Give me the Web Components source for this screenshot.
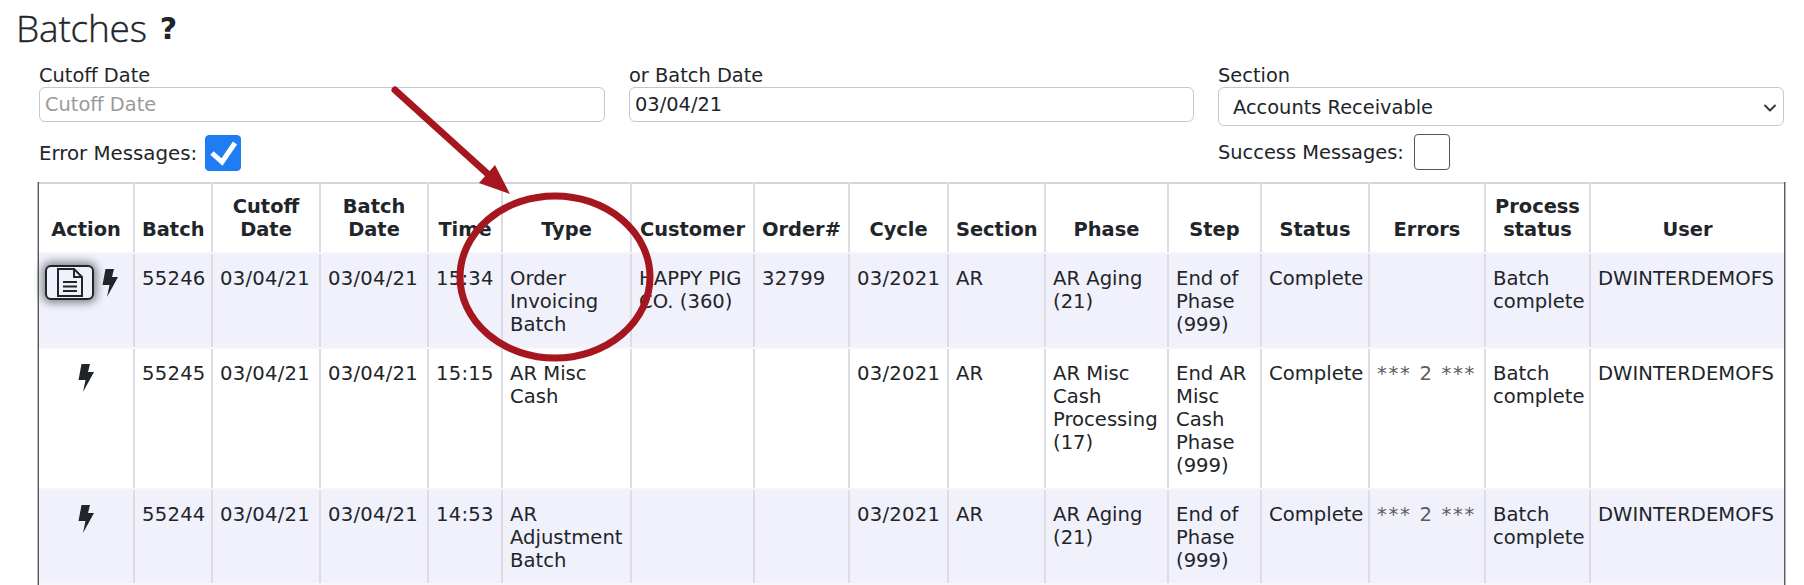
<!DOCTYPE html>
<html><head><meta charset="utf-8">
<style>
html,body{margin:0;padding:0;background:#fff;overflow:hidden}
body{width:1804px;height:585px;font-family:"DejaVu Sans",sans-serif;color:#212529}
</style></head><body>
<batches-page></batches-page>
<script>
const bolt=`<svg width="16" height="28" viewBox="0 0 16 28" style="flex:none"><path fill="#212529" d="M3.500 0H12L10 8H16L5 28L7.500 16H0.500Z"/></svg>`;
class BatchesPage extends HTMLElement{constructor(){super();this.attachShadow({mode:'open'}).innerHTML=`<style>
:host{display:block;position:relative;width:1804px;height:585px;overflow:hidden}
h1{margin:0;padding:5px 0 0 16px;height:45px;font:300 37px/45px "Open Sans",sans-serif;color:#212529;display:flex;align-items:center;gap:13px;letter-spacing:-.2px;-webkit-text-stroke:.35px #212529}
h1 b{font:700 30px/1 "DejaVu Sans",sans-serif;-webkit-text-stroke:0;margin-top:3px}
.filters{display:grid;grid-template-columns:566px 565px 566px;column-gap:24px;padding:14px 20px 0 39px;font-size:19.4px;width:max-content}
.overlay{position:absolute;left:0;top:0;pointer-events:none}
batch-table{margin:11px 0 0 39px}
</style>
<h1>Batches <b>?</b></h1>
<div class="filters">
<filter-field label="Cutoff Date" placeholder="Cutoff Date"></filter-field>
<filter-field label="or Batch Date" value="03/04/21"></filter-field>
<filter-field label="Section" value="Accounts Receivable" select></filter-field>
<check-field label="Error Messages:" checked></check-field>
<span></span>
<check-field label="Success Messages:"></check-field>
</div>
<batch-table></batch-table>
<svg class="overlay" width="1804" height="585">
<line x1="395" y1="90" x2="490" y2="176" stroke="#a5161f" stroke-width="7" stroke-linecap="round"/>
<path d="M510 194L479 183L495 165Z" fill="#a5161f"/>
<ellipse cx="555" cy="277" rx="95" ry="81" fill="none" stroke="#a5161f" stroke-width="7"/>
</svg>`}}
class FilterField extends HTMLElement{connectedCallback(){const sel=this.hasAttribute('select');const l=this.getAttribute('label'),v=this.getAttribute('value'),p=this.getAttribute('placeholder');
this.attachShadow({mode:'open'}).innerHTML=`<style>
:host{display:block;margin-top:-1px}
label{display:block;height:24px;line-height:26px}
.box{box-sizing:border-box;height:${sel?39:35}px;border:1px solid #c6c8cb;border-radius:6px;display:flex;align-items:center;justify-content:space-between;padding:${sel?2:0}px ${sel?5:6}px 0 ${sel?14:5}px;font-size:19.4px;color:${v?'#212529':'#9a9a9a'}}
</style><label>${l}</label><div class="box"><span>${v||p}</span>${sel?'<svg width="16" height="16" viewBox="0 0 16 16"><path fill="none" stroke="#343a40" stroke-width="2" stroke-linecap="round" stroke-linejoin="round" d="M3 5.500l5 5 5-5"/></svg>':''}</div>`}}
class CheckField extends HTMLElement{connectedCallback(){const c=this.hasAttribute('checked');
this.attachShadow({mode:'open'}).innerHTML=`<style>
:host{display:flex;align-items:center;gap:${c?8:10}px;margin-top:${c?9:8}px;height:36px;font-size:${c?19.8:19.4}px}
.c{box-sizing:border-box;width:36px;height:36px;border-radius:4px;border:1px solid ${c?'#1f7cf2':'#555'};background:${c?'#1f7cf2':'#fff'};display:block}
svg{display:block;margin:-1px}
</style><span>${this.getAttribute('label')}</span><span class="c">${c?'<svg width="36" height="36" viewBox="0 0 36 36"><path fill="none" stroke="#fff" stroke-width="5" d="M7 18l10 9L30 8"/></svg>':''}</span>`}}
const cols=[95,78,108,108,74,129,123,95,99,97,123,93,108,116,105,194];
const heads=['Action','Batch','Cutoff Date','Batch Date','Time','Type','Customer','Order#','Cycle','Section','Phase','Step','Status','Errors','Process status','User'];
const rows=[
['doc','55246','03/04/21','03/04/21','15:34','Order Invoicing Batch','HAPPY PIG CO. (360)','32799','03/2021','AR','AR Aging (21)','End of Phase (999)','Complete','','Batch complete','DWINTERDEMOFS'],
['','55245','03/04/21','03/04/21','15:15','AR Misc Cash','','','03/2021','AR','AR Misc Cash Processing (17)','End AR Misc Cash Phase (999)','Complete','*** 2 ***','Batch complete','DWINTERDEMOFS'],
['','55244','03/04/21','03/04/21','14:53','AR Adjustment Batch','','','03/2021','AR','AR Aging (21)','End of Phase (999)','Complete','*** 2 ***','Batch complete','DWINTERDEMOFS']];
class BatchTable extends HTMLElement{constructor(){super();
const doc=`<span class="btn"><svg width="26" height="29" viewBox="0 0 26 29"><path fill="none" stroke="#212529" stroke-width="2" d="M1 1H17L25 9V28H1ZM17 1V9H25M6 14H20M6 18.500H20M6 23H20"/></svg></span>`;
this.attachShadow({mode:'open'}).innerHTML=`<style>
:host{display:block;width:1745px}
table{border-collapse:collapse;table-layout:fixed;width:1745px;font-size:19.600px;line-height:23px;box-shadow:-1px 0 0 #555b63,-2px 0 0 #b4b8bc,1px 0 0 #555b63,2px 0 0 #b4b8bc;border-top:2px solid #d4d4d8}
th,td{border:2px solid #dcdce2;border-top-color:#f6f6fa;border-bottom-color:#f6f6fa;padding:13px 7px 11px;vertical-align:top;text-align:left;box-sizing:border-box}
th:first-child,td:first-child{border-left:0}th:last-child,td:last-child{border-right:0}
th{font-size:19.4px;font-weight:700;text-align:center;vertical-align:bottom;padding:0 7px 11px;height:70px;border-top:0;color:#212529}
tbody tr:nth-child(odd) td{background:#f1f1fc}
td.a{padding:10px 0 0 0}
.act{display:flex;align-items:flex-start;justify-content:center;gap:8px;padding-top:5px}
.act.d{justify-content:flex-start;padding:0 0 0 6px}
.n{letter-spacing:.25px}
.e{color:#5c5c5c;letter-spacing:1.700px;white-space:nowrap}
.btn{box-sizing:border-box;flex:none;width:49px;height:35px;border:2px solid #212529;border-radius:6px;background:#f1f1fc;display:flex;align-items:center;justify-content:center;box-shadow:0 0 8px 3px rgba(0,0,0,.45);margin-top:1px}
.btn+svg{margin-top:5px}
.btn svg{flex:none}
</style><table><colgroup>${cols.map(w=>`<col style="width:${w}px">`).join('')}</colgroup>
<thead><tr>${heads.map(h=>`<th>${h}</th>`).join('')}</tr></thead>
<tbody>${rows.map(r=>`<tr>${r.map((c,i)=>i==0?`<td class="a"><div class="act${c=='doc'?' d':''}">${c=='doc'?doc:''}${bolt}</div></td>`:`<td${c.startsWith('***')?' class="e"':/^[\d\/:]+$/.test(c)?' class="n"':''}>${c}</td>`).join('')}</tr>`).join('')}</tbody></table>`}}
customElements.define('filter-field',FilterField);
customElements.define('check-field',CheckField);
customElements.define('batch-table',BatchTable);
customElements.define('batches-page',BatchesPage);
</script></body></html>
